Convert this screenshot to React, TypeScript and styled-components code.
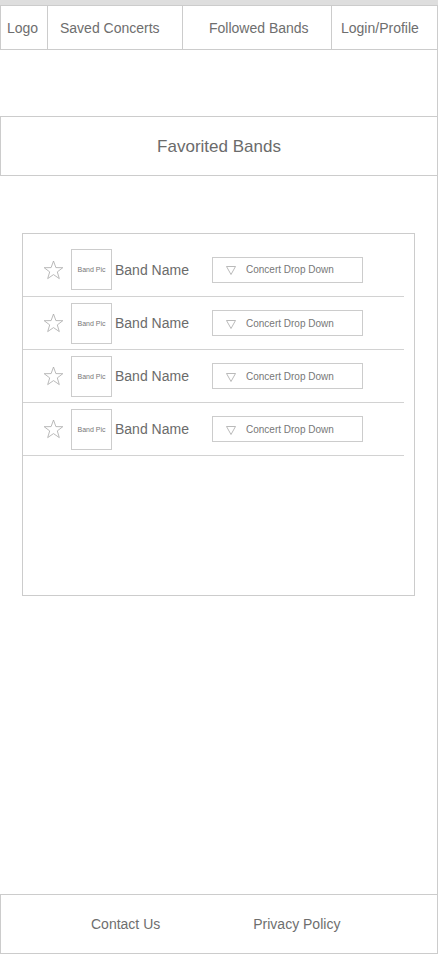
import React from 'react';
import styled, { createGlobalStyle } from 'styled-components';

const GlobalStyle = createGlobalStyle`
  html, body {
    margin: 0;
    padding: 0;
    background: #ffffff;
  }
  body {
    font-family: "Liberation Sans", Arial, sans-serif;
    color: #6b6b6b;
  }
`;

const line = '#cccccc';

const Page = styled.div`
  width: 438px;
  height: 954px;
  box-sizing: border-box;
  border-right: 1px solid ${line};
  display: flex;
  flex-direction: column;
`;

const TopBar = styled.div`
  height: 5px;
  background: #dedede;
  margin-right: -1px;
`;

const Nav = styled.nav`
  display: flex;
  height: 45px;
  box-sizing: border-box;
  border-top: 1px solid ${line};
  border-bottom: 1px solid ${line};
  border-left: 1px solid ${line};
`;

const NavItem = styled.div<{ $w: number; $pad: number; $last?: boolean }>`
  width: ${({ $w }) => $w}px;
  flex: ${({ $last }) => ($last ? '1' : 'none')};
  box-sizing: border-box;
  padding-left: ${({ $pad }) => $pad}px;
  padding-top: 1px;
  border-right: ${({ $last }) => ($last ? 'none' : `1px solid ${line}`)};
  display: flex;
  align-items: center;
  font-size: 14px;
  color: #6e6e6e;
  white-space: nowrap;
`;

const Banner = styled.section`
  margin-top: 66px;
  height: 60px;
  box-sizing: border-box;
  padding-top: 2px;
  border-top: 1px solid ${line};
  border-bottom: 1px solid ${line};
  border-left: 1px solid ${line};
  display: flex;
  align-items: center;
  justify-content: center;
  font-size: 17px;
  color: #6b6b6b;
`;

const ListBox = styled.section`
  margin: 57px 0 0 22px;
  width: 393px;
  height: 363px;
  box-sizing: border-box;
  border: 1px solid ${line};
  padding: 9px 10px 0 0;
`;

const Row = styled.div<{ $first?: boolean }>`
  height: ${({ $first }) => ($first ? 54 : 53)}px;
  box-sizing: border-box;
  border-bottom: 1px solid #d2d2d2;
  display: flex;
  align-items: center;
  padding-left: 20px;
`;

const StarIcon = styled.svg`
  width: 21px;
  height: 20px;
  flex: none;
`;

const Pic = styled.div`
  margin-left: 7px;
  width: 41px;
  height: 41px;
  box-sizing: border-box;
  border: 1px solid ${line};
  display: flex;
  align-items: center;
  justify-content: center;
  font-size: 7px;
  color: #777777;
  flex: none;
`;

const BandName = styled.div`
  margin-left: 3px;
  width: 97px;
  font-size: 14px;
  color: #6b6b6b;
  white-space: nowrap;
`;

const Dropdown = styled.div`
  width: 151px;
  height: 26px;
  box-sizing: border-box;
  border: 1px solid ${line};
  display: flex;
  align-items: center;
  padding-left: 13px;
  font-size: 10px;
  color: #777777;
  gap: 10px;
`;

const Tri = styled.svg`
  width: 10px;
  height: 9px;
  margin-top: 2px;
`;

const Spacer = styled.div`
  flex: 1;
`;

const Footer = styled.footer`
  height: 60px;
  box-sizing: border-box;
  border-top: 1px solid ${line};
  border-bottom: 1px solid ${line};
  border-left: 1px solid ${line};
  display: flex;
  align-items: center;
  padding-left: 90px;
  gap: 93px;
  font-size: 14px;
  color: #6e6e6e;
`;

const Star = () => (
  <StarIcon viewBox="0 0 21 20">
    <polygon
      points="10.5,1 12.9,7.6 19.8,7.7 14.3,11.9 16.3,18.6 10.5,14.6 4.7,18.6 6.7,11.9 1.2,7.7 8.1,7.6"
      fill="none"
      stroke="#a8a8a8"
      strokeWidth="0.8"
      strokeLinejoin="miter"
    />
  </StarIcon>
);

const bands = [1, 2, 3, 4];

export default function App() {
  return (
    <>
      <GlobalStyle />
      <Page>
        <TopBar />
        <Nav>
          <NavItem $w={47} $pad={6}>Logo</NavItem>
          <NavItem $w={135} $pad={12}>Saved Concerts</NavItem>
          <NavItem $w={149} $pad={26}>Followed Bands</NavItem>
          <NavItem $w={106} $pad={9} $last>Login/Profile</NavItem>
        </Nav>
        <Banner>Favorited Bands</Banner>
        <ListBox>
          {bands.map((b, i) => (
            <Row key={b} $first={i === 0}>
              <Star />
              <Pic>Band Pic</Pic>
              <BandName>Band Name</BandName>
              <Dropdown>
                <Tri viewBox="0 0 10 9">
                  <polygon points="0.5,0.5 9.5,0.5 5,8.5" fill="none" stroke="#a8a8a8" strokeWidth="0.8" />
                </Tri>
                Concert Drop Down
              </Dropdown>
            </Row>
          ))}
        </ListBox>
        <Spacer />
        <Footer>
          <span>Contact Us</span>
          <span>Privacy Policy</span>
        </Footer>
      </Page>
    </>
  );
}
